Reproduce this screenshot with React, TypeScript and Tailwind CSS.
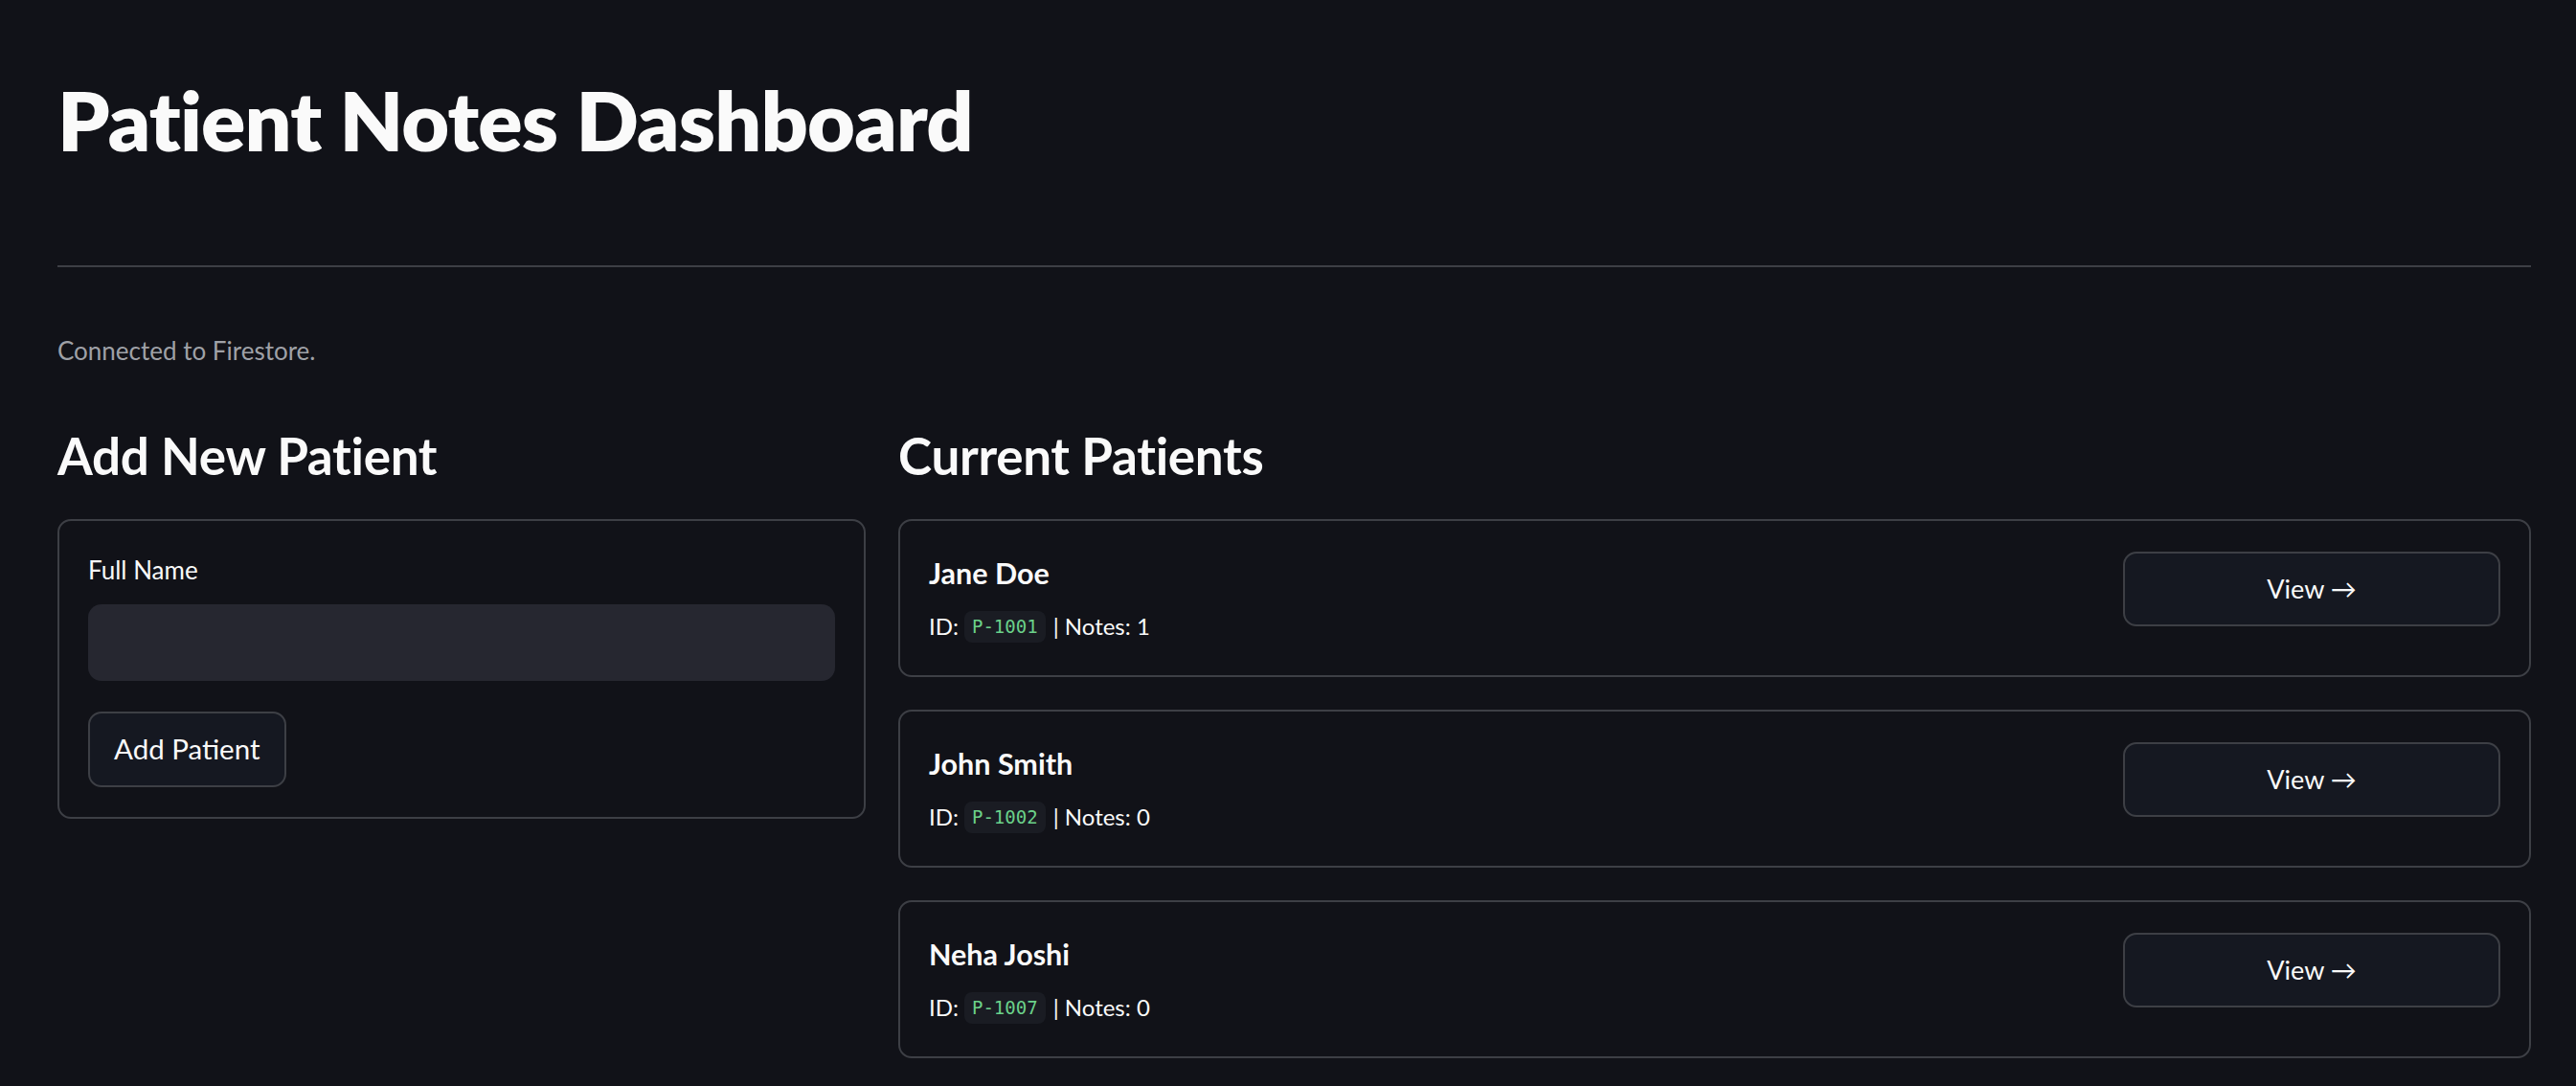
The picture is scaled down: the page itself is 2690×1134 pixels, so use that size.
import React from "react";

const PATIENTS = [
  { name: "Jane Doe", id: "P-1001", notes: 1 },
  { name: "John Smith", id: "P-1002", notes: 0 },
  { name: "Neha Joshi", id: "P-1007", notes: 0 },
];

const sans = { fontFamily: '"Source Sans Pro", Lato, "Noto Sans", sans-serif' };

export default function App() {
  return (
    <div
      className="min-h-screen bg-[#111218] text-[#fafafa] pl-[60px] pr-[47px] pt-[70px]"
      style={sans}
    >
      <h1 className="text-[86px] font-extrabold leading-[110px] tracking-[-0.8px]">Patient Notes Dashboard</h1>

      <hr className="mt-[97px] border-0 border-t-2 border-[#3d3f45]" />

      <p className="mt-[69px] text-[26px] leading-[36px] text-[#9fa1a7]">Connected to Firestore.</p>

      <div className="mt-[57px] flex gap-[34px] items-start">
        <div className="w-[844px] shrink-0">
          <h2 className="text-[53px] font-bold leading-[70px] tracking-[-0.3px]">Add New Patient</h2>
          <div className="mt-[31px] rounded-[14px] border-2 border-[#3d3f45] px-[30px] pt-[36px] pb-[31px]">
            <label className="block text-[26px] leading-[30px]">Full Name</label>
            <div className="mt-[21px] h-[80px] rounded-[14px] bg-[#262730]" />
            <button className="mt-[32px] h-[79px] rounded-[14px] border-2 border-[#3d3f45] bg-[#151821] px-[25px] text-[29.5px]">
              Add Patient
            </button>
          </div>
        </div>

        <div className="flex-1">
          <h2 className="text-[53px] font-bold leading-[70px] tracking-[-0.3px]">Current Patients</h2>
          <div className="mt-[31px] flex flex-col gap-[34px]">
            {PATIENTS.map((p) => (
              <div
                key={p.id}
                className="h-[165px] rounded-[14px] border-2 border-[#3d3f45] pl-[30px] pr-[30px] flex items-start justify-between"
              >
                <div className="pt-[36px]">
                  <div className="text-[30.5px] font-bold leading-[36px]">{p.name}</div>
                  <div className="mt-[21px] flex items-center text-[24px] leading-[34px]">
                    <span>ID:</span>
                    <code
                      className="ml-[6px] rounded-[8px] bg-[#1a1c23] px-[8px] leading-[33px] text-[19px] text-[#6bd18a]"
                      style={{ fontFamily: '"DejaVu Sans Mono", "Liberation Mono", monospace' }}
                    >
                      {p.id}
                    </code>
                    <span className="ml-[8px]">| Notes: {p.notes}</span>
                  </div>
                </div>
                <button className="mt-[32px] h-[78px] w-[394px] rounded-[14px] border-2 border-[#3d3f45] bg-[#151821] text-[27px]">
                  View →
                </button>
              </div>
            ))}
          </div>
        </div>
      </div>
    </div>
  );
}
